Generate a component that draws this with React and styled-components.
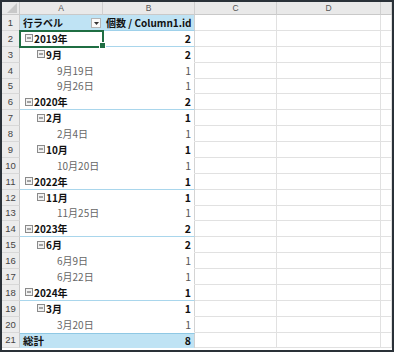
import React from "react";
import styled, { createGlobalStyle } from "styled-components";

const GlobalStyle = createGlobalStyle`
    html, body {
        margin: 0;
        padding: 0;
        background: #ffffff;
    }
    * {
        box-sizing: border-box;
    }
`;

const rows = [
    { kind: "year", label: "2019年", value: 2 },
    { kind: "month", label: "9月", value: 2 },
    { kind: "day", label: "9月19日", value: 1 },
    { kind: "day", label: "9月26日", value: 1 },
    { kind: "year", label: "2020年", value: 2 },
    { kind: "month", label: "2月", value: 1 },
    { kind: "day", label: "2月4日", value: 1 },
    { kind: "month", label: "10月", value: 1 },
    { kind: "day", label: "10月20日", value: 1 },
    { kind: "year", label: "2022年", value: 1 },
    { kind: "month", label: "11月", value: 1 },
    { kind: "day", label: "11月25日", value: 1 },
    { kind: "year", label: "2023年", value: 2 },
    { kind: "month", label: "6月", value: 2 },
    { kind: "day", label: "6月9日", value: 1 },
    { kind: "day", label: "6月22日", value: 1 },
    { kind: "year", label: "2024年", value: 1 },
    { kind: "month", label: "3月", value: 1 },
    { kind: "day", label: "3月20日", value: 1 },
];

function Collapse () {
    return (
        <CollapseBox>
            <svg width="8" height="8" viewBox="0 0 8 8">
                <rect x="0.5" y="0.5" width="7" height="7" fill="#f2f2f2" stroke="#8a8a8a" />
                <line x1="2" y1="4" x2="6" y2="4" stroke="#555" />
            </svg>
        </CollapseBox>
    );
}

function App () {
    return (
        <>
            <GlobalStyle />
            <Frame>
                <Sheet>
                    <Corner>
                        <svg width="10" height="10" viewBox="0 0 10 10">
                            <polygon points="10,0 10,10 0,10" fill="#c8c8c8" />
                        </svg>
                    </Corner>
                    <ColHead>A</ColHead>
                    <ColHead>B</ColHead>
                    <ColHead>C</ColHead>
                    <ColHead>D</ColHead>
                    <ColHead />

                    <RowNum>1</RowNum>
                    <HeadCell>
                        行ラベル
                        <FilterButton>
                            <svg width="5" height="3" viewBox="0 0 5 3">
                                <polygon points="0,0 5,0 2.5,3" fill="#333" />
                            </svg>
                        </FilterButton>
                    </HeadCell>
                    <HeadCell>個数 / Column1.id</HeadCell>
                    <Empty />
                    <Empty />
                    <Empty />

                    {rows.map((r, i) => (
                        <React.Fragment key={i}>
                            <RowNum>{i + 2}</RowNum>
                            <LabelCell kind={r.kind} selected={i === 0}>
                                {r.kind !== "day" && <Collapse />}
                                {r.label}
                            </LabelCell>
                            <ValueCell kind={r.kind}>{r.value}</ValueCell>
                            <Empty />
                            <Empty />
                            <Empty />
                        </React.Fragment>
                    ))}

                    <RowNum>21</RowNum>
                    <TotalCell>総計</TotalCell>
                    <TotalCell align="right">8</TotalCell>
                    <Empty />
                    <Empty />
                    <Empty />
                </Sheet>
            </Frame>
        </>
    );
}

const Frame = styled.div`
    width: 394px;
    height: 352px;
    border: 2px solid #2a3138;
    overflow: hidden;
    background: #ffffff;
    font-family: "Noto Sans CJK JP", "Noto Sans", sans-serif;
`;

const Sheet = styled.div`
    display: grid;
    grid-template-columns: 18px 83px 92px 82px 104px 1fr;
    grid-template-rows: 13px repeat(21, 15.88px);
`;

const Corner = styled.div`
    background: #e9e9e9;
    border-right: 1px solid #c9c9c9;
    border-bottom: 1px solid #c9c9c9;
    display: flex;
    align-items: flex-end;
    justify-content: flex-end;
    padding: 0 2px 1px 0;
`;

const ColHead = styled.div`
    background: #e9e9e9;
    border-right: 1px solid #cfcfcf;
    border-bottom: 1px solid #c9c9c9;
    color: #555;
    font-family: "Liberation Sans", sans-serif;
    font-size: 8.5px;
    display: flex;
    align-items: center;
    justify-content: center;
`;

const RowNum = styled.div`
    background: #ececec;
    border-right: 1px solid #c9c9c9;
    border-bottom: 1px solid #d8d8d8;
    color: #444;
    font-family: "Liberation Sans", sans-serif;
    font-size: 9.5px;
    display: flex;
    align-items: center;
    justify-content: center;
`;

const Empty = styled.div`
    border-right: 1px solid #e1e1e1;
    border-bottom: 1px solid #e1e1e1;
`;

const HeadCell = styled.div`
    position: relative;
    background: #bfe3f4;
    border-bottom: 1px solid #9fd1ea;
    font-size: 10px;
    font-weight: bold;
    color: #111;
    display: flex;
    align-items: center;
    padding-left: 3px;
    white-space: nowrap;
    &:nth-of-type(odd) {
        border-right: 1px solid #d0d0d0;
    }
`;

const FilterButton = styled.span`
    position: absolute;
    right: 2px;
    top: 3px;
    width: 10px;
    height: 10px;
    background: #fafafa;
    border: 1px solid #b5b5b5;
    display: flex;
    align-items: center;
    justify-content: center;
`;

const LabelCell = styled.div`
    position: relative;
    display: flex;
    align-items: center;
    white-space: nowrap;
    font-size: 10px;
    font-weight: ${({ kind }) => (kind === "day" ? "normal" : "bold")};
    color: ${({ kind }) => (kind === "day" ? "#666666" : "#111")};
    padding-left: ${({ kind }) => (kind === "year" ? "5px" : kind === "month" ? "17px" : "37px")};
    border-bottom: 1px solid ${({ kind }) => (kind === "year" ? "#a9d6ec" : "transparent")};
    outline: ${({ selected }) => (selected ? "2px solid #1f6e43" : "none")};
    outline-offset: -1px;
    &::after {
        content: "";
        display: ${({ selected }) => (selected ? "block" : "none")};
        position: absolute;
        right: -3px;
        bottom: -3px;
        width: 5px;
        height: 5px;
        background: #1f6e43;
        border: 1px solid #ffffff;
    }
`;

const CollapseBox = styled.span`
    display: inline-flex;
    margin-right: 1px;
`;

const ValueCell = styled.div`
    display: flex;
    align-items: center;
    justify-content: flex-end;
    padding-right: 3px;
    font-size: 10.5px;
    font-weight: ${({ kind }) => (kind === "day" ? "normal" : "bold")};
    color: ${({ kind }) => (kind === "day" ? "#555555" : "#111")};
    border-right: 1px solid #d4d4d4;
    border-bottom: 1px solid ${({ kind }) => (kind === "year" ? "#a9d6ec" : "transparent")};
`;

const TotalCell = styled.div`
    background: #bfe3f4;
    border-top: 1px solid #8fc8e4;
    border-right: ${({ align }) => (align === "right" ? "1px solid #d0d0d0" : "none")};
    display: flex;
    align-items: center;
    justify-content: ${({ align }) => (align === "right" ? "flex-end" : "flex-start")};
    padding: 0 3px;
    font-size: 10.5px;
    font-weight: bold;
    color: #111;
`;

export default App;
